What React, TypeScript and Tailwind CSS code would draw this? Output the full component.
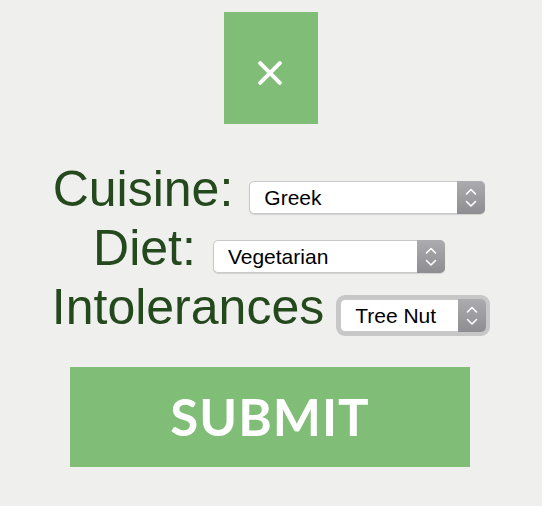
import React, { useState } from "react";

const green = "bg-[#80bd76]";

interface SelectProps {
  value: string;
  options: string[];
  width: string;
  gap: string;
  focused?: boolean;
  onChange: (v: string) => void;
}

const MacSelect: React.FC<SelectProps> = ({ value, options, width, gap, focused, onChange }) => {
  return (
    <div
      className={`relative ${gap} mt-[21px] h-[33px] ${width} rounded-[5px] bg-white border border-[#c9c9c9] shadow-[0_1px_1px_rgba(0,0,0,0.12)] ${
        focused ? "ring-4 ring-[#c7c7c7]" : ""
      }`}
    >
      <select
        value={value}
        onChange={(e) => onChange(e.target.value)}
        className="h-full w-full appearance-none bg-transparent pl-[14px] pr-[30px] text-[21px] text-black outline-none"
        style={{ fontFamily: '"Liberation Sans", Arial, sans-serif' }}
      >
        {options.map((o) => (
          <option key={o}>{o}</option>
        ))}
      </select>
      {/* stepper arrows */}
      <div className="pointer-events-none absolute -right-px -top-px -bottom-px w-[28px] rounded-r-[5px] bg-gradient-to-b from-[#acacb0] to-[#8d8d92]">
        <svg width="28" height="33" viewBox="0 0 28 33" fill="none">
          <polyline points="9.5,13 14,8.5 18.5,13" stroke="white" strokeWidth="1.6" strokeLinecap="round" strokeLinejoin="round" />
          <polyline points="9.5,20.5 14,25 18.5,20.5" stroke="white" strokeWidth="1.6" strokeLinecap="round" strokeLinejoin="round" />
        </svg>
      </div>
    </div>
  );
};

const labelClass = "text-[50px] leading-[59px] text-[#24491c] whitespace-nowrap";

export default function App() {
  const [cuisine, setCuisine] = useState("Greek");
  const [diet, setDiet] = useState("Vegetarian");
  const [intolerance, setIntolerance] = useState("Tree Nut");

  return (
    <div
      className="min-h-screen bg-[#efefee] flex flex-col items-center pt-3"
      style={{ fontFamily: '"Liberation Sans", Arial, sans-serif' }}
    >
      <button
        type="button"
        className={`w-[94px] h-[112px] ${green} flex items-center justify-center pt-[10px] pr-[2px]`}
      >
        <svg width="24" height="24" viewBox="0 0 24 24" fill="none">
          <path d="M2.2 2.2 L21.8 21.8 M21.8 2.2 L2.2 21.8" stroke="white" strokeWidth="4" strokeLinecap="round" />
        </svg>
      </button>

      <form className="mt-[36px] flex flex-col items-center" onSubmit={(e) => e.preventDefault()}>
        <div className="flex h-[59px] items-start justify-center pr-[4px]">
          <label className={labelClass}>Cuisine:</label>
          <MacSelect
            value={cuisine}
            options={["Greek", "Italian", "Mexican", "Thai"]}
            width="w-[236px]"
            gap="ml-[16px]"
            onChange={setCuisine}
          />
        </div>
        <div className="flex h-[59px] items-start justify-center pr-[4px]">
          <label className={labelClass}>Diet:</label>
          <MacSelect
            value={diet}
            options={["Vegetarian", "Vegan", "Paleo", "Ketogenic"]}
            width="w-[232px]"
            gap="ml-[17px]"
            onChange={setDiet}
          />
        </div>
        <div className="flex h-[59px] items-start justify-center pr-[4px]">
          <label className={labelClass}>Intolerances</label>
          <MacSelect
            value={intolerance}
            options={["Tree Nut", "Dairy", "Gluten", "Peanut"]}
            width="w-[146px]"
            gap="ml-[16px]"
            focused
            onChange={setIntolerance}
          />
        </div>

        <button
          type="submit"
          className={`mt-[30px] mr-[2px] w-[400px] h-[100px] ${green} text-white text-[51px] font-bold tracking-[1px]`}
          style={{ fontFamily: "Lato, sans-serif" }}
        >
          SUBMIT
        </button>
      </form>
    </div>
  );
}
